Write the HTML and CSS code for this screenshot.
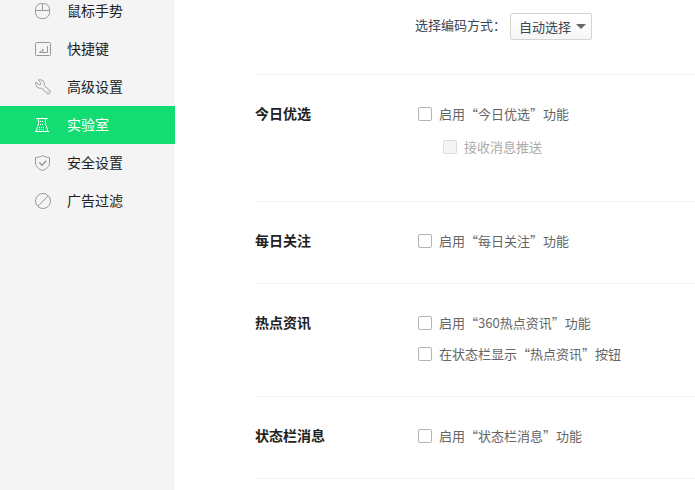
FILE: index.html
```html
<!DOCTYPE html>
<html lang="zh-CN">
<head>
    <meta charset="UTF-8">
    <meta name="viewport" content="width=device-width, initial-scale=1.0">
    <title>设置 - 实验室</title>
    <link rel="stylesheet" href="styles.css">
</head>
<body>
    <nav class="sidebar">
        <ul class="menu">
            <li><a class="menu-item" href="#mouse">
                <svg class="icon" viewBox="0 0 16 16"><rect x="0.5" y="0.5" width="14" height="15" rx="6"/><path d="M0.5 7.5h14M7.5 0.5v7"/></svg>
                <span>鼠标手势</span>
            </a></li>
            <li><a class="menu-item" href="#shortcut">
                <svg class="icon" viewBox="0 0 16 16"><rect x="0.5" y="1.5" width="15" height="13" rx="1"/><path d="M12.5 5v6.500H5M8 8v3.500H4.500z"/></svg>
                <span>快捷键</span>
            </a></li>
            <li><a class="menu-item" href="#advanced">
                <svg class="icon" viewBox="0 0 16 16"><path d="M3 1C4.700 0.400 6.900 0.800 8.200 2.100C9.300 3.300 9.700 4.900 9.200 6.400L14.500 11.200C15.400 12.100 15.400 13.300 14.600 14.200C13.700 15 12.400 15 11.600 14.200L6.500 9C5 9.500 3.300 9.200 2.100 8C0.800 6.700 0.400 4.600 1 3L3.700 5.700L5.600 5.600L5.700 3.700Z"/><path d="M12.500 12.500h1"/></svg>
                <span>高级设置</span>
            </a></li>
            <li><a class="menu-item active" href="#lab">
                <svg class="icon" viewBox="0 0 16 16"><path d="M1 1.500h12M3.500 1.500v5C3.500 8.500 1.500 10.500 1.500 14.500M10.500 1.500v5C10.500 8.500 12.500 10.500 12.500 14.500M0 14.500h14"/><path d="M5 4.500h4M5 7.500h4M4 10.500h6M4 12.500h6" stroke-dasharray="1 1"/></svg>
                <span>实验室</span>
            </a></li>
            <li><a class="menu-item" href="#security">
                <svg class="icon" viewBox="0 0 16 16"><path d="M7.500 0.500C9.500 1.800 12 2.400 14.500 2.500V8C14.500 11.500 11.500 14 7.500 15.500C3.500 14 0.500 11.500 0.500 8V2.500C3 2.400 5.500 1.800 7.500 0.500Z"/><path d="M4.300 7.500l2.700 2.700 4.200-4.500" stroke-width="1.500"/></svg>
                <span>安全设置</span>
            </a></li>
            <li><a class="menu-item" href="#adblock">
                <svg class="icon" viewBox="0 0 16 16"><circle cx="8" cy="8" r="7.500"/><path d="M3 13.200L13 3"/></svg>
                <span>广告过滤</span>
            </a></li>
        </ul>
    </nav>

    <main class="content">
        <section class="section encoding">
            <div class="encoding-field">
                <label for="encoding">选择编码方式：</label>
                <div class="select-box">
                    <select id="encoding">
                        <option>自动选择</option>
                    </select>
                </div>
            </div>
        </section>

        <section class="section">
            <h2>今日优选</h2>
            <div class="options">
                <label class="option"><input type="checkbox">启用“今日优选”功能</label>
                <label class="option sub"><input type="checkbox" disabled>接收消息推送</label>
            </div>
        </section>

        <section class="section">
            <h2>每日关注</h2>
            <div class="options">
                <label class="option"><input type="checkbox">启用“每日关注”功能</label>
            </div>
        </section>

        <section class="section">
            <h2>热点资讯</h2>
            <div class="options">
                <label class="option"><input type="checkbox">启用“360热点资讯”功能</label>
                <label class="option"><input type="checkbox">在状态栏显示“热点资讯”按钮</label>
            </div>
        </section>

        <section class="section">
            <h2>状态栏消息</h2>
            <div class="options">
                <label class="option"><input type="checkbox">启用“状态栏消息”功能</label>
            </div>
        </section>
    </main>
</body>
</html>
```

FILE: styles.css
```css
* {
    box-sizing: border-box;
}
body {
    display: flex;
    min-height: 100vh;
    margin: 0;
    overflow: hidden;
    background-color: #fff;
    font-family: 'Noto Sans CJK SC', 'Noto Sans', sans-serif;
    font-size: 13px;
    line-height: 20px;
    color: #666;
}

/* sidebar */
.sidebar {
    flex: 0 0 175px;
    background-color: #f4f4f4;
}
.menu {
    margin: -8px 0 0;
    padding: 0;
    list-style: none;
}
.menu-item {
    display: flex;
    align-items: center;
    gap: 16px;
    height: 38px;
    padding-left: 35px;
    font-size: 14px;
    color: #222;
    text-decoration: none;
}
.menu-item span {
    padding-bottom: 2px;
}
.menu-item.active {
    background-color: #12dc72;
    color: #fff;
}
.icon {
    width: 16px;
    height: 16px;
    fill: none;
    stroke: #999;
    stroke-width: 1;
}
.active .icon {
    stroke: #fff;
}

/* content */
.content {
    flex: 1;
    min-width: 0;
    padding-left: 80px;
}
.section {
    display: grid;
    grid-template-columns: 160px 1fr;
    padding: 29px 0 32px;
    border-bottom: 1px solid #f2f2f2;
}
.section h2 {
    margin: 0;
    font-size: 14px;
    font-weight: bold;
    line-height: 18px;
    color: #222;
}
.options {
    display: flex;
    flex-direction: column;
    gap: 11px;
    padding-left: 3px;
}
.option {
    display: flex;
    align-items: center;
    gap: 7px;
}
.option input {
    appearance: none;
    width: 14px;
    height: 14px;
    margin: 0;
    border: 1px solid #b4b4b4;
    border-radius: 2px;
    background-color: #fff;
}
.option input:checked {
    border-color: #12dc72;
    background-color: #12dc72;
}
.option.sub {
    margin: 2px 0 12px 25px;
    color: #aaa;
}
.option input:disabled {
    border-color: #ddd;
    background-color: #f4f4f4;
}

/* encoding */
.encoding {
    padding: 13px 0 34px;
}
.encoding-field {
    grid-column: 2;
    display: flex;
    gap: 4px;
    line-height: 24px;
    color: #3e4654;
}
.select-box {
    position: relative;
}
.select-box::after {
    content: "";
    position: absolute;
    top: 11px;
    right: 6px;
    border: 5px solid transparent;
    border-top-color: #666;
    border-bottom: 0;
    pointer-events: none;
}
select {
    appearance: none;
    display: block;
    width: 82px;
    height: 27px;
    padding: 0 8px;
    border: 1px solid #d4d4d4;
    border-radius: 2px;
    background: linear-gradient(#fff, #f6f6f6);
    font: inherit;
    color: inherit;
}
```
